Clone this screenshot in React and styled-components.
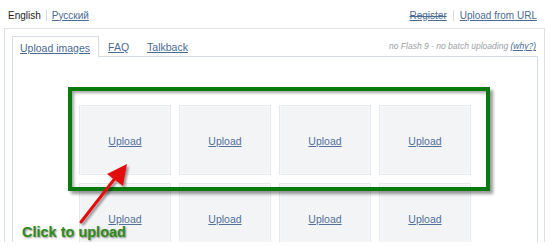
import React from 'react';
import styled, { createGlobalStyle } from 'styled-components';

const Global = createGlobalStyle`
  html, body {
    margin: 0;
    padding: 0;
    background: #fff;
  }
  body {
    font-family: "Liberation Sans", Arial, sans-serif;
    overflow: hidden;
  }
`;

const Page = styled.div`
	position: relative;
	width: 550px;
	height: 242px;
	overflow: hidden;
`;

const TopBar = styled.div`
	display: flex;
	justify-content: space-between;
	align-items: center;
	height: 28px;
	padding: 2px 13px 0 8px;
	box-sizing: border-box;
	font-size: 10px;
`;

const LinkGroup = styled.div`
	display: flex;
	align-items: center;
`;

const Current = styled.span`
	color: #222;
`;

const Sep = styled.span`
	width: 1px;
	height: 11px;
	background: #d4dbe2;
	margin: 0 ${(p) => p.$gap || 5}px;
`;

const Link = styled.a`
	color: #4a6a92;
	cursor: pointer;
	text-decoration-line: ${(p) => (p.$struck ? 'underline line-through' : 'underline')};
`;

const Panel = styled.div`
	margin: 0 5px 0 4px;
	border: 1px solid #dbe1e7;
	padding: 7px 6px 0 7px;
	height: 260px;
`;

const TabRow = styled.div`
	display: flex;
	align-items: flex-end;
	height: 20px;
	position: relative;
	z-index: 1;
`;

const Tab = styled.a`
	display: flex;
	align-items: center;
	box-sizing: border-box;
	padding: 1px 8px 0 7px;
	margin-right: 1px;
	font-size: 10.5px;
	color: #4a6a92;
	text-decoration: underline;
	border: 1px solid ${(p) => (p.$active ? '#d6dde4' : 'transparent')};
	border-bottom: none;
	background: #fff;
	height: ${(p) => (p.$active ? '21px' : '20px')};
	margin-bottom: ${(p) => (p.$active ? '-1px' : '0')};
`;

const Note = styled.div`
	margin-left: auto;
	align-self: center;
	padding-right: 2px;
	font-size: 8.5px;
	font-style: italic;
	color: #9aa0a6;

	& a {
		color: #4a6a92;
		text-decoration: underline;
	}
`;

const Content = styled.div`
	border: 1px solid #d6dde4;
	height: 240px;
	padding-top: 48px;
	box-sizing: border-box;
`;

const Grid = styled.div`
	display: grid;
	grid-template-columns: repeat(4, 92px);
	grid-auto-rows: 70px;
	gap: 8px;
	justify-content: center;
`;

const Tile = styled.div`
	display: flex;
	align-items: center;
	justify-content: center;
	background: #f2f4f6;
	border: 1px solid #e5e9ed;
	box-shadow: inset 0 0 0 1px #f8f9fa;
	font-size: 10.5px;

	& a {
		color: #52709a;
		text-decoration: underline;
		margin-top: 1px;
	}
`;

const GreenBox = styled.div`
	position: absolute;
	left: 68px;
	top: 87px;
	width: 422px;
	height: 104px;
	box-sizing: border-box;
	border: 4px solid #0b7a0e;
	box-shadow: 3px 3px 3px rgba(0, 0, 0, 0.4), inset 2px 2px 3px rgba(0, 0, 0, 0.35);
	pointer-events: none;
`;

const Arrow = styled.svg`
	position: absolute;
	left: 0;
	top: 0;
	pointer-events: none;
`;

const Caption = styled.div`
	position: absolute;
	left: 22px;
	top: 224px;
	font-size: 14.5px;
	font-weight: bold;
	color: #2f8a1c;
	text-shadow: 1px 1px 2px rgba(0, 0, 0, 0.45);
	white-space: nowrap;
`;

const tiles = Array.from({ length: 8 }, (_, i) => i);

const App = () => (
	<>
		<Global />
		<Page>
			<TopBar>
				<LinkGroup>
					<Current>English</Current>
					<Sep />
					<Link>Русский</Link>
				</LinkGroup>
				<LinkGroup>
					<Link $struck>Register</Link>
					<Sep $gap={6} />
					<Link>Upload from URL</Link>
				</LinkGroup>
			</TopBar>
			<Panel>
				<TabRow>
					<Tab $active>Upload images</Tab>
					<Tab>FAQ</Tab>
					<Tab>Talkback</Tab>
					<Note>
						no Flash 9 - no batch uploading <a>(why?)</a>
					</Note>
				</TabRow>
				<Content>
					<Grid>
						{tiles.map((t) => (
							<Tile key={t}>
								<a>Upload</a>
							</Tile>
						))}
					</Grid>
				</Content>
			</Panel>
			<GreenBox />
			<Arrow width="550" height="246" viewBox="0 0 550 246">
				<defs>
					<filter id="sh" x="-20%" y="-20%" width="140%" height="140%">
						<feDropShadow dx="2" dy="2" stdDeviation="1.2" floodColor="#000" floodOpacity="0.4" />
					</filter>
				</defs>
				<g filter="url(#sh)">
					<line x1="81" y1="222" x2="116" y2="177" stroke="#e3100f" strokeWidth="3" strokeLinecap="round" />
					<polygon points="127,164 123,186 107,174" fill="#e3100f" />
				</g>
			</Arrow>
			<Caption>Click to upload</Caption>
		</Page>
	</>
);

export default App;
